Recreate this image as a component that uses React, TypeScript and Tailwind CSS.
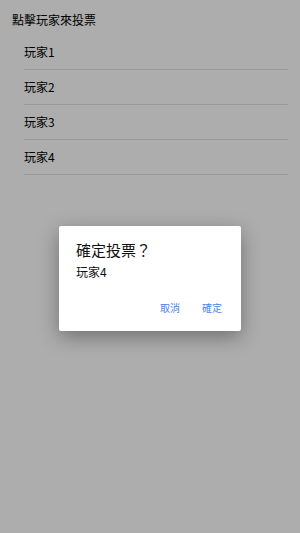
import React from 'react';

const players = ['玩家1', '玩家2', '玩家3', '玩家4'];

const font = { fontFamily: '"Noto Sans CJK TC", "Noto Sans", sans-serif' };

export default function App() {
  return (
    <div className="relative w-[300px] h-[533px] overflow-hidden bg-white text-black" style={font}>
      <div className="h-[35px] pl-3 pt-3 text-[12px] leading-4">點擊玩家來投票</div>
      <ul className="ml-6 mr-3">
        {players.map((p) => (
          <li key={p} className="h-[35px] flex items-center border-b border-[#e2e2e2] text-[12px] leading-4">
            {p}
          </li>
        ))}
      </ul>

      <div className="absolute inset-0 bg-black/[0.32]" />

      <div className="absolute left-[59px] top-[226px] w-[182px] h-[105px] bg-white rounded-[2px] shadow-[0_6px_20px_rgba(0,0,0,0.35)] flex flex-col">
        <div className="pl-[17px] pt-[14px] text-[15px] leading-5 text-[#111]">確定投票？</div>
        <div className="pl-[17px] mt-1 text-[12px] leading-4 text-[#111]">玩家4</div>
        <div className="mt-auto mb-[15px] flex justify-end gap-[22px] pr-[19px] text-[10px] leading-4 text-[#4a86e8]">
          <span>取消</span>
          <span>確定</span>
        </div>
      </div>
    </div>
  );
}
